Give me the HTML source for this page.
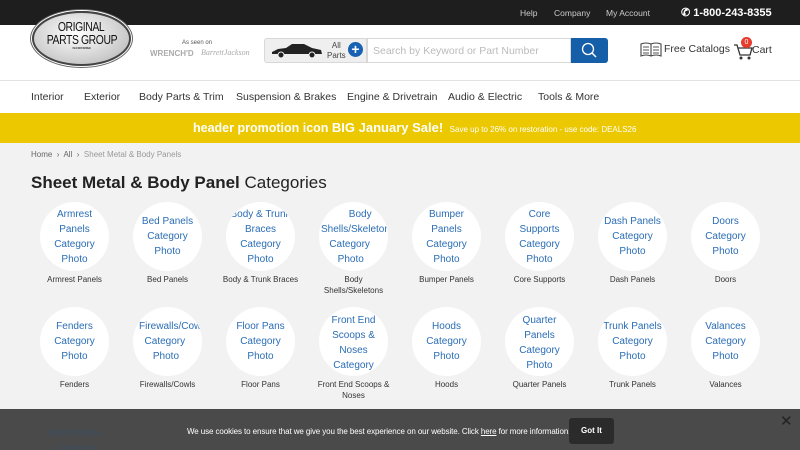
<!DOCTYPE html>
<html><head><meta charset="utf-8"><style>
*{margin:0;padding:0;box-sizing:border-box}
body{width:800px;height:450px;overflow:hidden;background:#f2f2f2;font-family:"Liberation Sans",sans-serif;position:relative}
.a{position:absolute}
.top{left:0;top:0;width:800px;height:25px;background:#1e1e1e;color:#ccc;font-size:8.5px}
.hdr{left:0;top:25px;width:800px;height:56px;background:#fff;border-bottom:1px solid #e2e2e2}
.nav{left:0;top:81px;width:800px;height:32px;background:#fff;font-size:10.5px;color:#333}
.promo{left:0;top:113px;width:800px;height:30px;background:#ebc800;color:#fff;white-space:nowrap}
.c{position:absolute;width:69px;height:69px;border-radius:50%;background:#fff;overflow:hidden;color:#2a6db5;font-size:10px;line-height:15px;text-align:center;white-space:nowrap}
.l{position:absolute;width:93px;text-align:center;font-size:8px;color:#333;line-height:10.5px}
</style></head><body>
<div class="a top">
 <span class="a" style="left:520px;top:8px">Help</span>
 <span class="a" style="left:554px;top:8px">Company</span>
 <span class="a" style="left:606px;top:8px">My Account</span>
 <span class="a" style="left:681px;top:6px;color:#fff;font-weight:bold;font-size:11px">&#9990; 1-800-243-8355</span>
</div>
<div class="a hdr">
 <div class="a" style="left:32px;top:-14px;width:99px;height:55px;border-radius:50%;background:radial-gradient(ellipse at 45% 40%,#fff,#c9c9c9 70%,#9a9a9a);border:2px solid #444;box-shadow:0 0 0 1px #fff,0 0 0 2px #666;text-align:center;color:#111;font-size:13px;line-height:12.5px;padding-top:8px;letter-spacing:-0.5px"><span style="display:inline-block;transform:scaleX(0.8)">ORIGINAL</span><br><span style="display:inline-block;transform:scaleX(0.8);white-space:nowrap">PARTS GROUP</span><div style="font-size:3px;line-height:5px">INCORPORATED</div></div>
 <div class="a" style="left:182px;top:15px;font-size:6px;color:#555">As seen on</div>
 <div class="a" style="left:150px;top:24px;font-size:8px;color:#aaa;font-weight:bold">WRENCH'D</div>
 <div class="a" style="left:201px;top:23px;font-size:8px;color:#aaa;font-style:italic;font-family:'Liberation Serif',serif">BarrettJackson</div>
 <div class="a" style="left:264px;top:13px;width:103px;height:25px;background:#efefef;border:1px solid #d8d8d8;border-radius:3px 0 0 3px"></div>
 <svg class="a" style="left:270px;top:18px" width="54" height="16" viewBox="0 0 54 16"><path d="M2 9 L8 6 L16 5 L22 1 L34 1 L42 5 L51 7 L52 11 L2 11 Z" fill="#222"/><circle cx="11" cy="12" r="3" fill="#222" stroke="#efefef" stroke-width="1"/><circle cx="42" cy="12" r="3" fill="#222" stroke="#efefef" stroke-width="1"/></svg>
 <div class="a" style="left:327px;top:16px;font-size:8px;color:#444;text-align:center;line-height:10px">All<br>Parts</div>
 <div class="a" style="left:348px;top:17px;width:15px;height:15px;border-radius:50%;background:#1861b3;color:#fff;font-size:14px;line-height:14px;text-align:center;font-weight:bold">+</div>
 <div class="a" style="left:367px;top:13px;width:204px;height:25px;background:#fff;border:1px solid #d8d8d8;font-size:10.5px;color:#bbb;padding:6px 5px;white-space:nowrap">Search by Keyword or Part Number</div>
 <div class="a" style="left:571px;top:13px;width:37px;height:25px;background:#155fa9;border-radius:0 3px 3px 0"><svg width="37" height="25"><circle cx="17" cy="11" r="5.5" fill="none" stroke="#fff" stroke-width="1.3"/><path d="M21 15 L25 19" stroke="#fff" stroke-width="1.5"/></svg></div>
 <svg class="a" style="left:640px;top:17px" width="22" height="16"><path d="M1 2 Q6 0 11 2 Q16 0 21 2 V14 Q16 12 11 14 Q6 12 1 14 Z M11 2 V14" fill="none" stroke="#444" stroke-width="1.1"/><path d="M3 5H9M3 8H9M3 11H9M13 5H19M13 8H19M13 11H19" stroke="#555"/></svg>
 <div class="a" style="left:664px;top:18px;font-size:10.5px;color:#333">Free Catalogs</div>
 <svg class="a" style="left:733px;top:17px" width="20" height="18"><path d="M1 3H4L7 13H17L19 6H5" fill="none" stroke="#333" stroke-width="1.3"/><circle cx="8" cy="16" r="1.5" fill="#333"/><circle cx="16" cy="16" r="1.5" fill="#333"/></svg>
 <div class="a" style="left:741px;top:12px;width:11px;height:11px;border-radius:50%;background:#e53c2e;color:#fff;font-size:7px;text-align:center;line-height:11px">0</div>
 <div class="a" style="left:752px;top:19px;font-size:10.5px;color:#333">Cart</div>
</div>
<div class="a nav">
 <span class="a" style="left:31px;top:10px">Interior</span>
 <span class="a" style="left:84px;top:10px">Exterior</span>
 <span class="a" style="left:139px;top:10px">Body Parts &amp; Trim</span>
 <span class="a" style="left:236px;top:10px">Suspension &amp; Brakes</span>
 <span class="a" style="left:347px;top:10px">Engine &amp; Drivetrain</span>
 <span class="a" style="left:448px;top:10px">Audio &amp; Electric</span>
 <span class="a" style="left:538px;top:10px">Tools &amp; More</span>
</div>
<div class="a promo">
 <div class="a" style="left:193px;top:7px;font-size:12.5px;font-weight:bold">header promotion icon <span style="font-size:13px">BIG January Sale!</span> <span style="font-size:8px;font-weight:normal;margin-left:3px">Save up to 26% on restoration - use code: DEALS26</span></div>
</div>
<div class="a" style="left:31px;top:150px;font-size:8px;color:#666">Home &nbsp;›&nbsp; All &nbsp;›&nbsp; <span style="color:#999">Sheet Metal &amp; Body Panels</span></div>
<div class="a" style="left:31px;top:173px;font-size:17px;color:#222"><b>Sheet Metal &amp; Body Panel</b> Categories</div>

<div class="c" style="left:40px;top:202px"><div style="padding-top:5px">Armrest<br>Panels<br>Category<br>Photo</div></div><div class="l" style="left:28px;top:275px">Armrest Panels</div>
<div class="c" style="left:133px;top:202px"><div style="padding-top:12px">Bed Panels<br>Category<br>Photo</div></div><div class="l" style="left:121px;top:275px">Bed Panels</div>
<div class="c" style="left:226px;top:202px"><div style="padding-top:5px">Body &amp; Trunk<br>Braces<br>Category<br>Photo</div></div><div class="l" style="left:214px;top:275px">Body &amp; Trunk Braces</div>
<div class="c" style="left:319px;top:202px"><div style="padding-top:5px;text-align:left;padding-left:2px">&nbsp;&nbsp;&nbsp;&nbsp;&nbsp;&nbsp;&nbsp;&nbsp;&nbsp;&nbsp;Body<br>Shells/Skeletons<br>&nbsp;&nbsp;&nbsp;Category<br>&nbsp;&nbsp;&nbsp;&nbsp;&nbsp;&nbsp;Photo</div></div><div class="l" style="left:307px;top:275px">Body<br>Shells/Skeletons</div>
<div class="c" style="left:412px;top:202px"><div style="padding-top:5px">Bumper<br>Panels<br>Category<br>Photo</div></div><div class="l" style="left:400px;top:275px">Bumper Panels</div>
<div class="c" style="left:505px;top:202px"><div style="padding-top:5px">Core<br>Supports<br>Category<br>Photo</div></div><div class="l" style="left:493px;top:275px">Core Supports</div>
<div class="c" style="left:598px;top:202px"><div style="padding-top:12px">Dash Panels<br>Category<br>Photo</div></div><div class="l" style="left:586px;top:275px">Dash Panels</div>
<div class="c" style="left:691px;top:202px"><div style="padding-top:12px">Doors<br>Category<br>Photo</div></div><div class="l" style="left:679px;top:275px">Doors</div>

<div class="c" style="left:40px;top:307px"><div style="padding-top:12px">Fenders<br>Category<br>Photo</div></div><div class="l" style="left:28px;top:380px">Fenders</div>
<div class="c" style="left:133px;top:307px"><div style="padding-top:12px;text-align:left;padding-left:6px">Firewalls/Cowls<br>&nbsp;&nbsp;Category<br>&nbsp;&nbsp;&nbsp;&nbsp;&nbsp;Photo</div></div><div class="l" style="left:121px;top:380px">Firewalls/Cowls</div>
<div class="c" style="left:226px;top:307px"><div style="padding-top:12px">Floor Pans<br>Category<br>Photo</div></div><div class="l" style="left:214px;top:380px">Floor Pans</div>
<div class="c" style="left:319px;top:307px"><div style="padding-top:6px">Front End<br>Scoops &amp;<br>Noses<br>Category<br>Photo</div></div><div class="l" style="left:307px;top:380px">Front End Scoops &amp;<br>Noses</div>
<div class="c" style="left:412px;top:307px"><div style="padding-top:12px">Hoods<br>Category<br>Photo</div></div><div class="l" style="left:400px;top:380px">Hoods</div>
<div class="c" style="left:505px;top:307px"><div style="padding-top:6px">Quarter<br>Panels<br>Category<br>Photo</div></div><div class="l" style="left:493px;top:380px">Quarter Panels</div>
<div class="c" style="left:598px;top:307px"><div style="padding-top:12px">Trunk Panels<br>Category<br>Photo</div></div><div class="l" style="left:586px;top:380px">Trunk Panels</div>
<div class="c" style="left:691px;top:307px"><div style="padding-top:12px">Valances<br>Category<br>Photo</div></div><div class="l" style="left:679px;top:380px">Valances</div>

<div class="a" style="left:0;top:409px;width:800px;height:41px;background:#4a4a4a;overflow:hidden">
 <div class="a" style="left:40px;top:17px;width:69px;text-align:center;font-size:10px;line-height:15px;color:#3e4e60">Windshields<br>Category</div>
 <div class="a" style="left:187px;top:18px;font-size:8px;color:#fff;white-space:nowrap;letter-spacing:-0.1px">We use cookies to ensure that we give you the best experience on our website. Click <u>here</u> for more information.</div>
 <div class="a" style="left:569px;top:9px;width:45px;height:26px;background:#2b2b2b;border-radius:3px;color:#fff;font-size:8px;font-weight:bold;text-align:center;line-height:26px">Got It</div>
 <div class="a" style="left:780px;top:3px;font-size:15px;color:#222">✕</div>
</div>
</body></html>
